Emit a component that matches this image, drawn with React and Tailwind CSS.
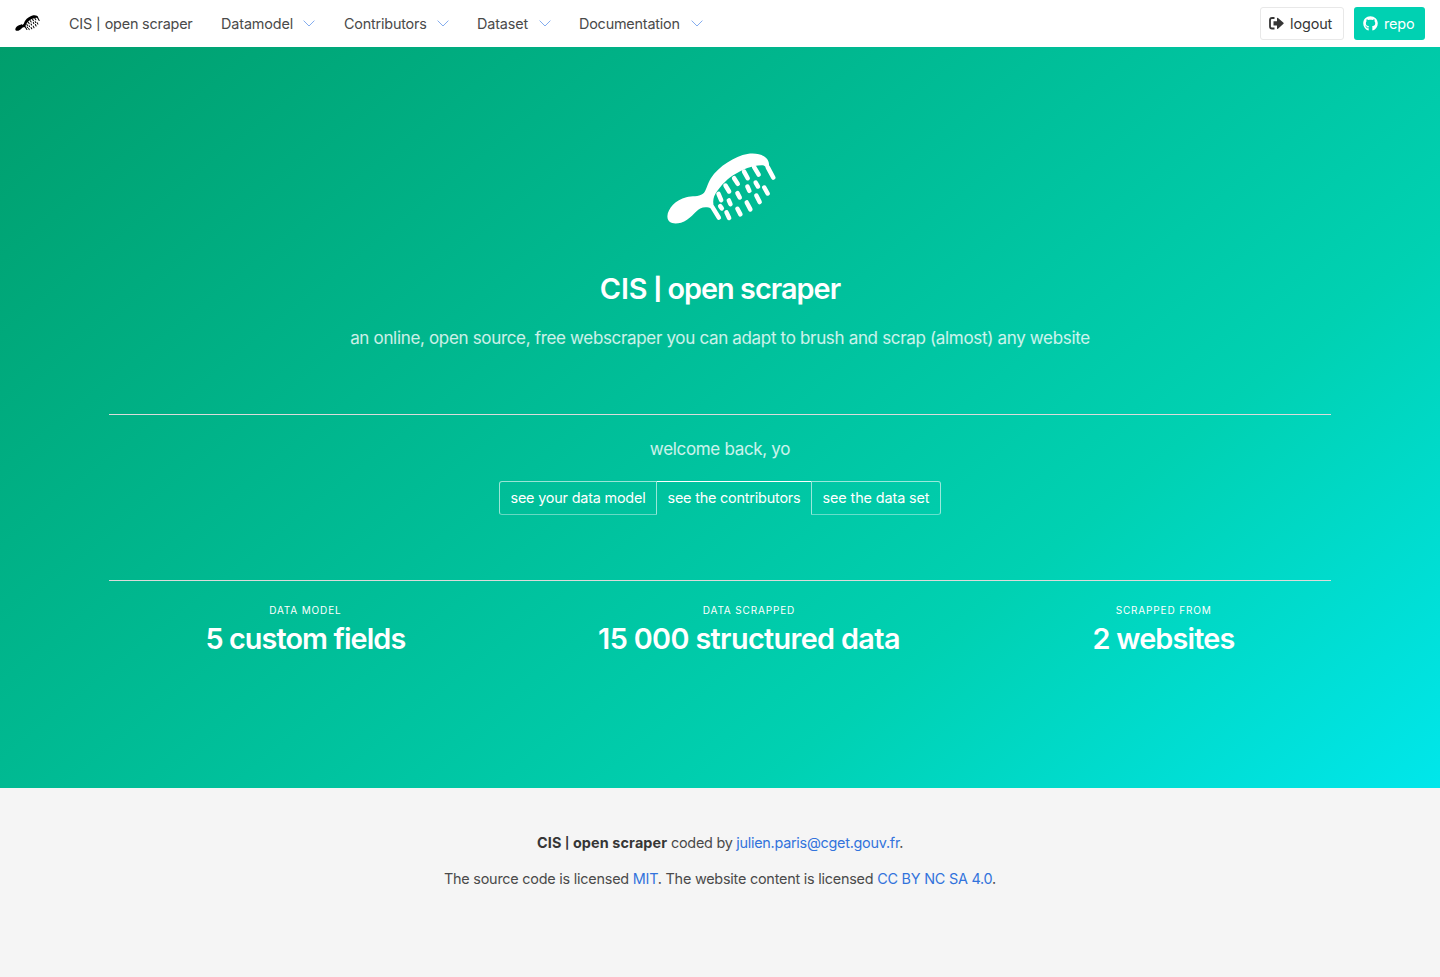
import React from "react";
import { FaGithub } from "react-icons/fa";

const teeth = [
  [189, 204, 208, 235],
  [207, 163, 215, 182],
  [228, 138, 239, 156],
  [254, 116, 265, 133],
  [284, 96, 295, 116],
  [314, 82, 328, 105],
  [356, 84, 372, 114],
  [212, 200, 217, 207],
  [238, 183, 243, 194],
  [264, 161, 271, 174],
  [294, 141, 300, 154],
  [319, 129, 326, 141],
  [231, 219, 239, 236],
  [264, 208, 273, 225],
  [292, 189, 303, 210],
  [321, 168, 331, 188],
  [345, 144, 355, 162],
];

function Comb({ className }) {
  return (
    <svg viewBox="52 40 328 214" className={className} fill="currentColor" stroke="currentColor">
      <path
        stroke="none"
        d="M53 230C54 208 78 180 110 173C128 169 146 173 160 163C170 156 173 133 184 116C207 80 257 49 294 43C325 38 352 48 358 67C361 78 359 88 354 88C350 88 350 78 340 77C310 76 281 89 251 107C228 122 205 148 194 170C190 180 190 193 194 205L186 208C176 203 163 202 152 207C136 216 121 242 94 250C70 256 52 250 53 230Z"
      />
      <g strokeWidth="13.5" strokeLinecap="round">
        {teeth.map(([x1, y1, x2, y2]) => (
          <line key={`${x1}-${y1}`} x1={x1} y1={y1} x2={x2} y2={y2} />
        ))}
      </g>
    </svg>
  );
}

function Menu({ label, className }) {
  return (
    <a className={`flex items-center whitespace-nowrap ${className}`}>
      {label}
      <svg className="mt-px ml-auto h-[7px] w-3 shrink-0" viewBox="0 0 12 7" fill="none" stroke="#84adef">
        <path d="M0.6 0.6L6 6L11.4 0.6" />
      </svg>
    </a>
  );
}

function Stat({ label, value, valueClass }) {
  return (
    <div className="flex flex-auto justify-center text-center">
      <div>
        <p className="mb-[6px] h-[14px] text-[10px] leading-[14px] tracking-[0.85px]">{label}</p>
        <p className={`h-8 text-[28.8px] leading-8 font-semibold whitespace-nowrap ${valueClass}`}>{value}</p>
      </div>
    </div>
  );
}

export default function App() {
  return (
    <div className="min-h-[977px] bg-[#f5f5f5] font-['Inter',sans-serif] text-[14.4px] text-[#4a4a4a]">
      <nav className="flex h-[47px] items-center bg-white pr-[15px] pl-[15px]">
        <Comb className="-mt-[2px] h-4 w-[25px] text-black" />
        <a className="ml-[29px] w-[123px] tracking-[-0.2px] whitespace-nowrap">
          CIS <span className="relative -top-px mx-[0.5px] text-[12px] font-medium">|</span> open scraper
        </a>
        <Menu label="Datamodel" className="ml-[29px] w-[94px] tracking-[-0.12px]" />
        <Menu label="Contributors" className="ml-[29px] w-[105px] tracking-[-0.2px]" />
        <Menu label="Dataset" className="ml-[28px] w-[74px] tracking-[-0.15px]" />
        <Menu label="Documentation" className="ml-[28px] w-[124px] tracking-[-0.2px]" />
        <div className="ml-auto flex gap-[10px]">
          <a className="flex h-[33px] w-[84px] items-center rounded-[3px] border border-[#e8e8e8] pl-2 text-[#363636]">
            <svg className="mr-[6px] h-[13px] w-[15px]" viewBox="0 0 15 13" fill="currentColor">
              <path d="M5.5 1H3Q1 1 1 3V9.5Q1 11.500 3 11.500H5.500" fill="none" stroke="currentColor" strokeWidth="1.800" />
              <path d="M4.500 4.200H8V1.300Q8 .3 9 .9L14.500 5.800Q15 6.300 14.500 6.800L9 11.700Q8 12.300 8 11.300V8.500H4.500Z" />
            </svg>
            <span className="tracking-[-0.1px]">logout</span>
          </a>
          <a className="flex h-[33px] w-[71px] items-center rounded-[3px] bg-[#00d1b2] pl-[9px] text-white">
            <FaGithub className="mr-[6px] size-[15px]" />
            <span className="tracking-[-0.1px]">repo</span>
          </a>
        </div>
      </nav>

      <section className="flex h-[741px] flex-col items-center bg-[linear-gradient(141deg,#009e6c_0%,#00d1b2_71%,#00e7eb_100%)] px-[109px] pt-[106px] text-white">
        <Comb className="ml-[3px] h-[71px] w-[109px]" />
        <h1 className="mt-[47px] h-9 text-[28.8px] leading-9 font-semibold tracking-[-0.95px] whitespace-nowrap">
          <span className="tracking-[-0.2px]">CIS</span> <span className="relative -top-[2px] text-[22px] font-extrabold">|</span> open scraper
        </h1>
        <p className="mt-[18px] h-[26px] text-[17px] leading-[26px] tracking-[-0.33px] whitespace-nowrap text-white/80">
          an online, open source, free webscraper you can adapt to brush and scrap (almost) any website
        </p>
        <hr className="mt-[63px] h-px w-full border-0 bg-[#dbdbdb]" />
        <p className="mt-[21px] h-[26px] text-[17px] leading-[26px] tracking-[-0.32px] text-white/80">welcome back, yo</p>
        <div className="mt-[19px] flex h-[34px] text-center leading-8 tracking-[-0.19px] whitespace-nowrap">
          <a className="w-[158px] rounded-l-[3px] border border-white/60 border-b-white/40">see your data model</a>
          <a className="w-[154px] border-t border-white">see the contributors</a>
          <a className="w-[130px] rounded-r-[3px] border border-white/60 border-b-white/40 tracking-[-0.1px]">see the data set</a>
        </div>
        <hr className="mt-[65px] h-px w-full border-0 bg-[#dbdbdb]" />
        <div className="mt-[22px] flex w-full">
          <Stat label="DATA MODEL" value="5 custom fields" valueClass="tracking-[-0.9px]" />
          <Stat label="DATA SCRAPPED" value="15 000 structured data" valueClass="tracking-[-0.64px]" />
          <Stat label="SCRAPPED FROM" value="2 websites" valueClass="tracking-[-0.8px]" />
        </div>
      </section>

      <footer className="flex flex-col items-center pt-11 leading-[22px] tracking-[-0.26px] whitespace-nowrap">
        <p className="h-9">
          <strong className="font-bold tracking-[0.12px] text-[#363636]">
            CIS <span className="relative -top-px text-[11.5px]">|</span> open scraper
          </strong>{" "}
          coded by <a className="text-[#3273dc]">julien.paris@cget.gouv.fr</a>.
        </p>
        <p className="tracking-[-0.22px]">
          The source code is licensed <a className="text-[#3273dc]">MIT</a>. The website content is licensed{" "}
          <a className="text-[#3273dc]">CC BY NC SA 4.0</a>.
        </p>
      </footer>
    </div>
  );
}
